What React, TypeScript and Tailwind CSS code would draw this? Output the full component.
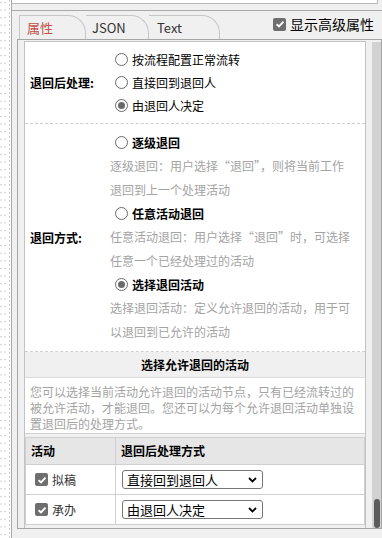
import React from 'react';

const cjk = "font-['Noto_Sans_CJK_SC','Noto_Sans',sans-serif]";

function DotStrip() {
  return (
    <div className="h-full w-[12px] shrink-0 border-r border-[#a8a8a8] bg-white">
      <svg width="11" height="538">
        <defs>
          <pattern id="dots" width="4" height="7.6" patternUnits="userSpaceOnUse">
            <rect x="0" y="2" width="2" height="1" fill="#cdcdcd" />
          </pattern>
        </defs>
        <rect x="0" y="0" width="8" height="538" fill="url(#dots)" />
        <line x1="9.5" y1="0" x2="9.5" y2="538" stroke="#cdcdcd" strokeDasharray="2 2" />
      </svg>
    </div>
  );
}

function Check() {
  return (
    <span className="flex h-[13px] w-[13px] shrink-0 items-center justify-center rounded-[2px] bg-[#6e6e6e]">
      <svg width="10" height="10" viewBox="0 0 10 10">
        <path d="M1.6 5.2 L4 7.5 L8.5 2.6" fill="none" stroke="white" strokeWidth="1.9" />
      </svg>
    </span>
  );
}

function Radio({ checked }: { checked?: boolean }) {
  return (
    <span className="flex h-[13px] w-[13px] shrink-0 items-center justify-center rounded-full border border-[#6a6a6a] bg-white">
      {checked && <span className="h-[7px] w-[7px] rounded-full bg-[#6a6a6a]" />}
    </span>
  );
}

function RadioLine({ label, checked, bold }: { label: string; checked?: boolean; bold?: boolean }) {
  return (
    <div className="flex h-[23px] items-center gap-[4px] pl-[5px]">
      <Radio checked={checked} />
      <span className={bold ? 'font-bold' : ''}>{label}</span>
    </div>
  );
}

function Desc({ lines }: { lines: string[] }) {
  return (
    <div className="leading-[24px] text-[#a3a3a3]">
      {lines.map((l) => (
        <div key={l} className="whitespace-nowrap">{l}</div>
      ))}
    </div>
  );
}

function Select({ value }: { value: string }) {
  return (
    <div className="flex h-[19px] w-[141px] items-center justify-between rounded-[3px] border border-[#767676] bg-white pl-[4px] pr-[5px] text-[13px] text-black">
      <span>{value}</span>
      <svg width="9" height="6" viewBox="0 0 9 6">
        <path d="M1 1 L4.5 4.5 L8 1" fill="none" stroke="black" strokeWidth="1.8" />
      </svg>
    </div>
  );
}

function Tab({ label, active, w, pl, first }: { label: string; active?: boolean; w: string; pl: string; first?: boolean }) {
  return (
    <div
      className={`flex h-[24px] items-center rounded-tr-[18px] border-t border-r border-[#c6c6c6] text-[13px] ${w} ${pl} ${
        first ? 'border-l' : ''
      } ${active ? 'text-[#c0504d]' : 'text-[#333]'}`}
    >
      {label}
    </div>
  );
}

export default function App() {
  return (
    <div className={`flex h-[538px] w-[382px] overflow-hidden bg-[#f0f0f0] text-[12px] text-black ${cjk}`}>
      <DotStrip />
      <div className="flex flex-1 flex-col">
        <div className="h-[4px] w-[366px] border-b border-r border-[#b9b9b9] bg-white" />
        <div className="mt-[6px] h-px bg-[#a9a9a9]" />

        {/* tabs */}
        <div className="flex h-[28px] items-end pl-[7px] pr-[8px]">
          <Tab label="属性" active first w="w-[67px]" pl="pl-[7px]" />
          <Tab label="JSON" w="w-[63px]" pl="pl-[6px]" />
          <Tab label="Text" w="w-[71px]" pl="pl-[8px]" />
          <div className="mb-[7px] ml-auto flex items-center gap-[4px] text-[14px] leading-[16px]">
            <Check />
            <span>显示高级属性</span>
          </div>
        </div>

        {/* panel */}
        <div className="ml-[5px] flex h-[490px] border-y border-l border-r border-[#a6a6a6] pt-px">
          <div className="ml-[6px] flex w-[342px] flex-col border-x border-t border-[#c3c3c3] bg-white">
            <div className="flex border-b border-dashed border-[#cfcfcf]">
              <div className="flex w-[85px] shrink-0 items-center pl-[5px] font-bold">退回后处理:</div>
              <div className="flex-1 py-[6px]">
                <RadioLine label="按流程配置正常流转" />
                <RadioLine label="直接回到退回人" />
                <RadioLine label="由退回人决定" checked />
              </div>
            </div>

            <div className="flex border-b border-dashed border-[#cfcfcf]">
              <div className="flex w-[85px] shrink-0 items-center pl-[5px] font-bold">退回方式:</div>
              <div className="flex-1 pt-[7px] pb-[7px]">
                <RadioLine label="逐级退回" bold />
                <Desc lines={['逐级退回：用户选择“退回”，则将当前工作', '退回到上一个处理活动']} />
                <RadioLine label="任意活动退回" bold />
                <Desc lines={['任意活动退回：用户选择“退回”时，可选择', '任意一个已经处理过的活动']} />
                <RadioLine label="选择退回活动" bold checked />
                <Desc lines={['选择退回活动：定义允许退回的活动，用于可', '以退回到已允许的活动']} />
              </div>
            </div>

            <div className="flex h-[26px] items-center justify-center border-b border-[#dcdcdc] bg-[#f0f0f0] font-bold">
              选择允许退回的活动
            </div>
            <div className="border-b border-[#d4d4d4] px-[5px] pt-[6px] pb-px leading-[16px] text-[#a3a3a3]">
              <div className="whitespace-nowrap">您可以选择当前活动允许退回的活动节点，只有已经流转过的</div>
              <div className="whitespace-nowrap">被允许活动，才能退回。您还可以为每个允许退回活动单独设</div>
              <div className="whitespace-nowrap">置退回后的处理方式。</div>
            </div>

            <div className="bg-[#f0f0f0] py-[3px]">
              <div className="border border-[#cfcfcf] bg-white">
                <div className="flex h-[27px] border-b border-[#cfcfcf] bg-[#e6e6e6] font-bold">
                  <div className="flex w-[90px] items-center border-r border-[#cfcfcf] pl-[5px]">活动</div>
                  <div className="flex flex-1 items-center pl-[5px]">退回后处理方式</div>
                </div>
                <div className="flex h-[30px] border-b border-[#cfcfcf]">
                  <div className="flex w-[90px] items-center gap-[4px] border-r border-[#cfcfcf] pl-[9px] text-[#333]">
                    <Check />
                    <span>拟稿</span>
                  </div>
                  <div className="flex flex-1 items-center pl-[6px]">
                    <Select value="直接回到退回人" />
                  </div>
                </div>
                <div className="flex h-[29px]">
                  <div className="flex w-[90px] items-center gap-[4px] border-r border-[#cfcfcf] pl-[9px] text-[#333]">
                    <Check />
                    <span>承办</span>
                  </div>
                  <div className="flex flex-1 items-center pl-[6px]">
                    <Select value="由退回人决定" />
                  </div>
                </div>
              </div>
            </div>
          </div>

          {/* scrollbar */}
          <div className="ml-[6px] mt-px flex w-[9px] flex-col bg-[#d2d2d2]">
            <div className="mx-auto mt-auto h-[29px] w-[6px] rounded-full bg-[#5c5c5c]" />
          </div>
        </div>
      </div>
    </div>
  );
}
